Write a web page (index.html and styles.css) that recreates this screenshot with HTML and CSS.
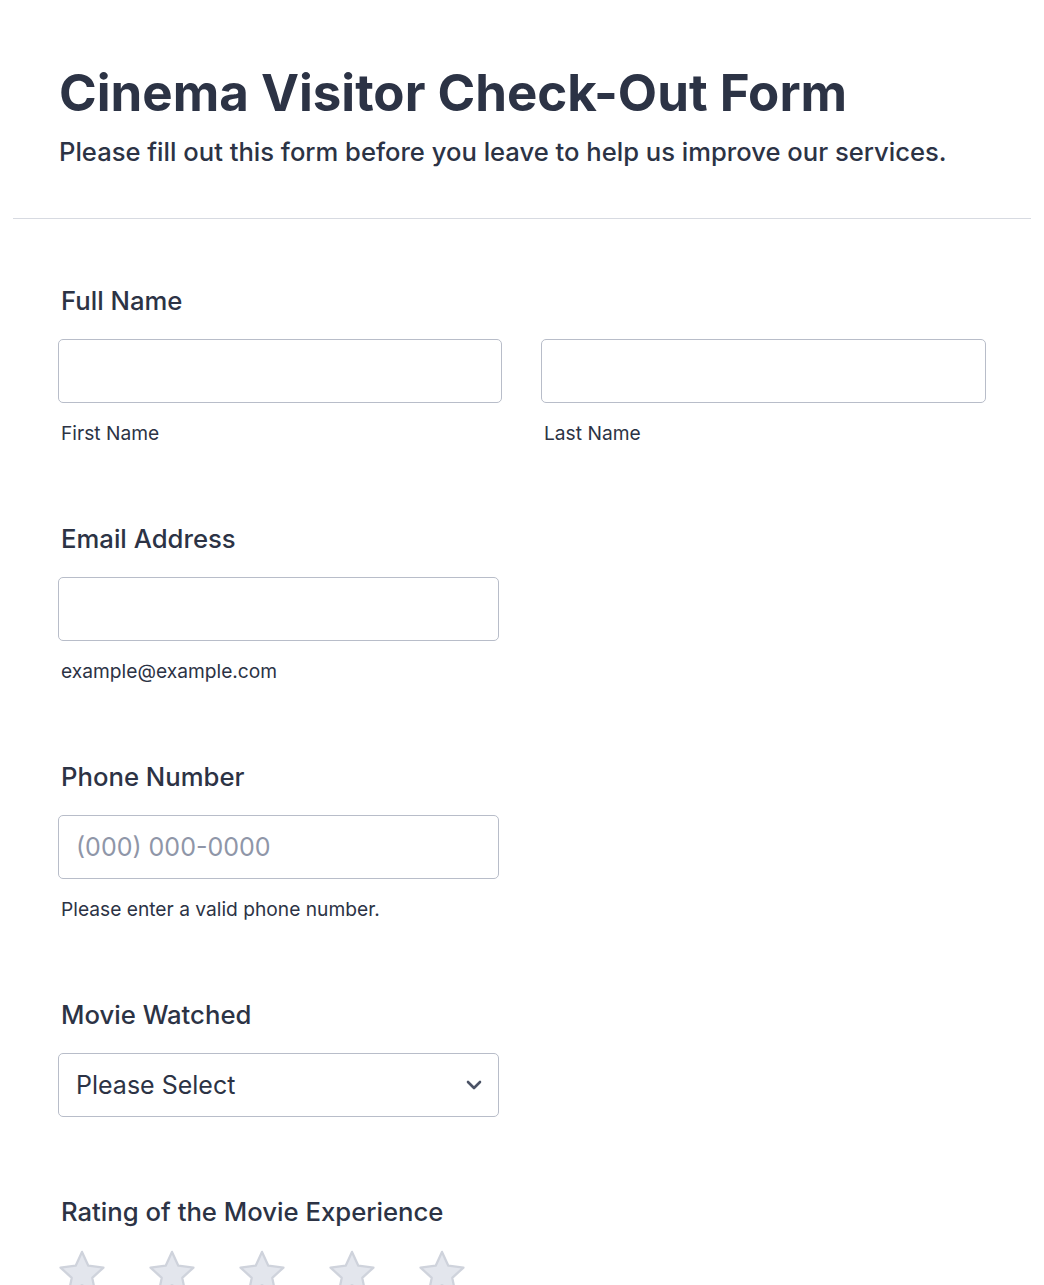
FILE: index.html
```html
<!DOCTYPE html>
<html lang="en">
<head>
<meta charset="utf-8">
<title>Cinema Visitor Check-Out Form</title>
<link rel="stylesheet" href="styles.css">
</head>
<body>
<div class="form">
  <div class="header">
    <h1 class="title">Cinema Visitor Check-Out Form</h1>
    <p class="subtitle">Please fill out this form before you leave to help us improve our services.</p>
  </div>
  <div class="fields">
    <div class="field">
      <div class="label">Full Name</div>
      <div class="name-row">
        <div class="col">
          <div class="input"></div>
          <div class="sublabel">First Name</div>
        </div>
        <div class="col">
          <div class="input"></div>
          <div class="sublabel">Last Name</div>
        </div>
      </div>
    </div>
    <div class="field">
      <div class="label">Email Address</div>
      <div class="input short"></div>
      <div class="sublabel">example@example.com</div>
    </div>
    <div class="field">
      <div class="label">Phone Number</div>
      <div class="input short"><span class="placeholder">(000) 000-0000</span></div>
      <div class="sublabel">Please enter a valid phone number.</div>
    </div>
    <div class="field">
      <div class="label">Movie Watched</div>
      <div class="input short select"><span class="value">Please Select</span>
        <svg class="chevron" width="16" height="10" viewBox="0 0 16 10"><path d="M2 2 L8 8 L14 2" fill="none" stroke="#4b5366" stroke-width="2.6" stroke-linecap="round" stroke-linejoin="round"/></svg>
      </div>
    </div>
    <div class="field">
      <div class="label">Rating of the Movie Experience</div>
      <div class="stars">
        <svg class="star" viewBox="0 0 50 48"><path d="M25 2 L31.6 16.4 L47.4 18.3 L35.7 29.1 L38.9 44.6 L25 36.8 L11.1 44.6 L14.3 29.1 L2.6 18.3 L18.4 16.4 Z" fill="#e3e6ed" stroke="#cfd3dc" stroke-width="2.4" stroke-linejoin="round"/></svg>
        <svg class="star" viewBox="0 0 50 48"><path d="M25 2 L31.6 16.4 L47.4 18.3 L35.7 29.1 L38.9 44.6 L25 36.8 L11.1 44.6 L14.3 29.1 L2.6 18.3 L18.4 16.4 Z" fill="#e3e6ed" stroke="#cfd3dc" stroke-width="2.4" stroke-linejoin="round"/></svg>
        <svg class="star" viewBox="0 0 50 48"><path d="M25 2 L31.6 16.4 L47.4 18.3 L35.7 29.1 L38.9 44.6 L25 36.8 L11.1 44.6 L14.3 29.1 L2.6 18.3 L18.4 16.4 Z" fill="#e3e6ed" stroke="#cfd3dc" stroke-width="2.4" stroke-linejoin="round"/></svg>
        <svg class="star" viewBox="0 0 50 48"><path d="M25 2 L31.6 16.4 L47.4 18.3 L35.7 29.1 L38.9 44.6 L25 36.8 L11.1 44.6 L14.3 29.1 L2.6 18.3 L18.4 16.4 Z" fill="#e3e6ed" stroke="#cfd3dc" stroke-width="2.4" stroke-linejoin="round"/></svg>
        <svg class="star" viewBox="0 0 50 48"><path d="M25 2 L31.6 16.4 L47.4 18.3 L35.7 29.1 L38.9 44.6 L25 36.8 L11.1 44.6 L14.3 29.1 L2.6 18.3 L18.4 16.4 Z" fill="#e3e6ed" stroke="#cfd3dc" stroke-width="2.4" stroke-linejoin="round"/></svg>
      </div>
    </div>
  </div>
</div>
</body>
</html>
```

FILE: styles.css
```css
* { box-sizing: border-box; }
html, body { margin: 0; padding: 0; background: #ffffff; }
body {
  font-family: Inter, "Noto Sans", "Liberation Sans", sans-serif;
  color: #2c3345;
  overflow: hidden;
}
.form { padding: 0 13px; }
.header {
  padding: 62px 46px 50px;
  border-bottom: 1px solid #d7dae1;
}
.title {
  margin: 0;
  font-size: 51px;
  font-weight: 700;
  line-height: 1.2;
}
.subtitle {
  margin: 12px 0 0;
  font-size: 25.6px;
  font-weight: 500;
  line-height: 1.3;
}
.fields { padding: 67px 45px 0; }
.field { margin-bottom: 80px; }
.label {
  padding-left: 3px;
  font-size: 25.7px;
  font-weight: 500;
  line-height: 30px;
  margin-bottom: 23px;
}
.name-row {
  display: grid;
  grid-template-columns: 444px 445px;
  column-gap: 39px;
}
.input {
  height: 64px;
  border: 1px solid #b8bdc9;
  border-radius: 5px;
  background: #fff;
  display: flex;
  align-items: center;
  padding: 0 17px;
}
.input.short { width: 441px; }
.sublabel {
  padding-left: 3px;
  margin-top: 19px;
  font-size: 19.2px;
  line-height: 22px;
}
.placeholder { font-size: 25px; color: #8f96a8; }
.select { justify-content: space-between; padding-right: 16px; }
.value { font-size: 25px; color: #2c3345; }
.stars { display: flex; gap: 42px; }
.star { width: 48px; height: 46px; }
```
